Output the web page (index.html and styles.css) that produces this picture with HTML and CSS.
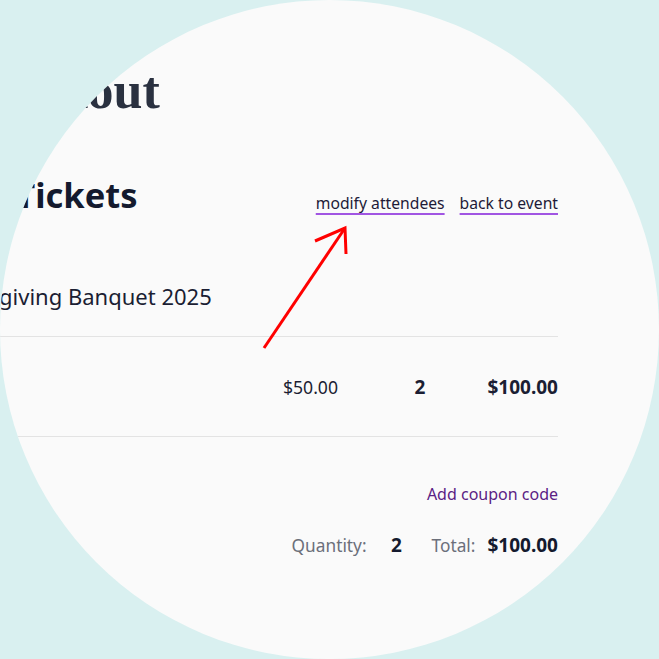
FILE: index.html
```html
<!DOCTYPE html>
<html lang="en">
<head>
<meta charset="utf-8">
<title>Checkout</title>
<link rel="stylesheet" href="styles.css">
</head>
<body>
<div class="lens">
  <div class="page">
    <h1 class="page-title">Checkout</h1>
    <div class="tickets-head">
      <h2 class="tickets-title">Your Tickets</h2>
      <nav class="head-links">
        <a class="head-link" href="#">modify attendees</a>
        <a class="head-link" href="#">back to event</a>
      </nav>
    </div>
    <div class="event-name">Thanksgiving Banquet 2025</div>
    <div class="ticket-row">
      <div class="cell-name">Adult</div>
      <div class="cell-price">$50.00</div>
      <div class="cell-qty">2</div>
      <div class="cell-total">$100.00</div>
    </div>
    <div class="coupon"><a class="coupon-link" href="#">Add coupon code</a></div>
    <div class="summary">
      <div class="pair"><span class="label">Quantity:</span><span class="value value-qty">2</span></div>
      <div class="pair"><span class="label">Total:</span><span class="value">$100.00</span></div>
    </div>
  </div>
  <svg class="arrow" width="659" height="659" viewBox="0 0 659 659" aria-hidden="true">
    <path d="M264 348 L345 228" stroke="#ff0000" stroke-width="3" fill="none"/>
    <path d="M315 241 L345 228 L346 254" stroke="#ff0000" stroke-width="3" fill="none" stroke-linejoin="miter"/>
  </svg>
</div>
</body>
</html>
```
FILE: styles.css
```css
html, body {
  margin: 0;
  padding: 0;
  background: #d9f0f0;
}

.lens {
  position: relative;
  width: 659px;
  height: 659px;
  border-radius: 50%;
  overflow: hidden;
  background: #fafafa;
}

.page {
  margin-left: -75px;
  width: 633px;
  padding-top: 61px;
  font-family: "Noto Sans", "Open Sans", sans-serif;
  color: #1b1e33;
}

.page-title {
  margin: 0;
  padding-left: 21px;
  font-family: "Liberation Serif", "Times New Roman", serif;
  font-weight: 700;
  font-size: 52px;
  line-height: 60px;
  color: #2a3140;
}

.tickets-head {
  margin-top: 52px;
  display: flex;
  justify-content: space-between;
  align-items: flex-end;
}

.tickets-title {
  margin: 0;
  padding-left: 2px;
  font-size: 34.5px;
  line-height: 44px;
  font-weight: 700;
  color: #141a2e;
}

.head-links {
  display: flex;
  gap: 15px;
  margin-bottom: 4px;
}

.head-link {
  font-size: 15.7px;
  line-height: 20px;
  color: #1e1b38;
  text-decoration: underline;
  text-decoration-color: #a155e2;
  text-decoration-thickness: 2px;
  text-underline-offset: 4px;
  text-decoration-skip-ink: none;
}

.event-name {
  margin-top: 64px;
  font-size: 22px;
  line-height: 30px;
  color: #1b1e33;
}

.ticket-row {
  margin-top: 25px;
  display: grid;
  grid-template-columns: 1fr 136px 92px 92px;
  align-items: baseline;
  padding: 38px 0 37px;
  border-top: 1px solid #e3e3e3;
  border-bottom: 1px solid #e3e3e3;
  line-height: 24px;
}

.cell-name {
  font-size: 17.5px;
}

.cell-price {
  font-size: 17.6px;
  text-align: right;
  padding-right: 36px;
}

.cell-qty {
  font-size: 19px;
  font-weight: 700;
  text-align: center;
}

.cell-total {
  font-size: 19px;
  font-weight: 700;
  text-align: right;
}

.coupon {
  margin-top: 46px;
  text-align: right;
  line-height: 22px;
}

.coupon-link {
  font-size: 16px;
  color: #5a2184;
  text-decoration: none;
}

.summary {
  margin-top: 28px;
  display: flex;
  justify-content: flex-end;
  align-items: baseline;
  gap: 17px;
  line-height: 24px;
}

.pair {
  display: flex;
  align-items: baseline;
  gap: 12px;
}

.label {
  font-size: 17.3px;
  color: #6b6f7a;
}

.value {
  font-size: 19px;
  font-weight: 700;
  color: #141a2e;
}

.value-qty {
  min-width: 36px;
  text-align: center;
}

.arrow {
  position: absolute;
  left: 0;
  top: 0;
  pointer-events: none;
}
```
